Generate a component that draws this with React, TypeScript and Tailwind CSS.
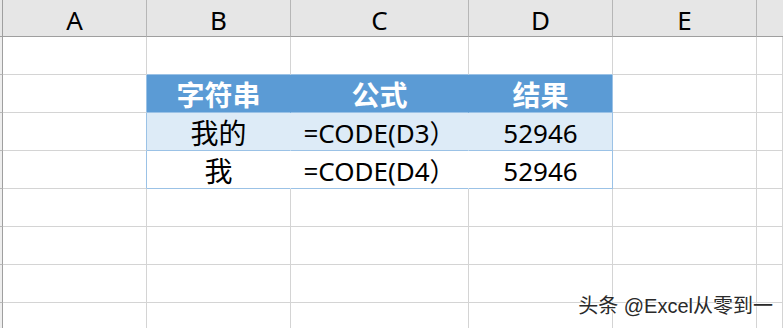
import React from "react";

type Cell = { w: string; cls: string; text?: string; txt?: string };

const FONT = "font-['Noto_Sans','Noto_Sans_CJK_SC',sans-serif]";

const W = {
  rh: "w-[3px]",
  a: "w-[144px]",
  b: "w-[144px]",
  c: "w-[178px]",
  d: "w-[144px]",
  e: "w-[144px]",
};

const grid = "border-r border-b border-r-[#d4d4d4] border-b-[#d4d4d4] bg-white";
const rowHead = "border-r border-b border-r-[#9f9f9f] border-b-[#b8b8b8] bg-[#eeeeee]";

// Han text reads a little larger than the Latin text in these cells
const isHan = (s: string) => /^[\u4e00-\u9fff]+$/.test(s);

function plainRow(
  key: number,
  overrides: Partial<Record<"a" | "b" | "c" | "d" | "e", string>> = {},
  texts: Partial<Record<"b" | "c" | "d", string>> = {},
  txt = "text-black"
) {
  const cells: Cell[] = [
    { w: W.rh, cls: rowHead },
    { w: W.a, cls: overrides.a ?? grid },
    { w: W.b, cls: overrides.b ?? grid, text: texts.b, txt },
    { w: W.c, cls: overrides.c ?? grid, text: texts.c, txt },
    { w: W.d, cls: overrides.d ?? grid, text: texts.d, txt },
    { w: W.e, cls: overrides.e ?? grid },
  ];
  return (
    <div key={key} className="flex h-[38px] shrink-0">
      {cells.map((c, i) => (
        <div
          key={i}
          className={`${c.w} shrink-0 h-full flex items-center justify-center ${c.cls}`}
        >
          {c.text ? (
            <span
              className={`${isHan(c.text) ? "text-[28px] pt-[2px]" : "text-[26px] pt-[3px]"} leading-none ${c.txt}`}
            >
              {c.text}
            </span>
          ) : null}
        </div>
      ))}
      <div className={`flex-1 h-full ${grid}`} />
    </div>
  );
}

const edgeA = "border-r border-b border-r-[#9bc2e6] border-b-[#d4d4d4] bg-white";
const topEdge = "border-r border-b border-r-[#d4d4d4] border-b-[#9bc2e6] bg-white";

const headFill = "border-r border-b border-r-[#5b9bd5] border-b-[#9bc2e6] bg-[#5b9bd5]";
const headFillD = "border-r border-b border-r-[#9bc2e6] border-b-[#9bc2e6] bg-[#5b9bd5]";
const bandFill = "border-r border-b border-r-[#ddebf7] border-b-[#9bc2e6] bg-[#ddebf7]";
const bandFillD = "border-r border-b border-r-[#9bc2e6] border-b-[#9bc2e6] bg-[#ddebf7]";
const whiteFill = "border-r border-b border-r-white border-b-[#9bc2e6] bg-white";
const whiteFillD = "border-r border-b border-r-[#9bc2e6] border-b-[#9bc2e6] bg-white";

export default function App() {
  const letters: [string, string][] = [
    [W.a, "A"],
    [W.b, "B"],
    [W.c, "C"],
    [W.d, "D"],
    [W.e, "E"],
  ];
  return (
    <div className={`relative w-[783px] h-[328px] overflow-hidden bg-white ${FONT}`}>
      {/* column header strip */}
      <div className="flex h-[37px] bg-[#e6e6e6]">
        <div className="w-[3px] shrink-0 h-full border-r border-b border-r-[#9f9f9f] border-b-[#9f9f9f]" />
        {letters.map(([w, l]) => (
          <div
            key={l}
            className={`${w} shrink-0 h-full flex items-center justify-center border-r border-b border-r-[#b6b6b6] border-b-[#9f9f9f] text-[26px] leading-none text-black`}
          >
            <span className="pt-[4px]">{l}</span>
          </div>
        ))}
        <div className="flex-1 h-full border-b border-b-[#9f9f9f]" />
      </div>

      {plainRow(1, { b: topEdge, c: topEdge, d: topEdge })}
      {plainRow(2, { a: edgeA, b: headFill, c: headFill, d: headFillD }, { b: "字符串", c: "公式", d: "结果" }, "text-white font-bold")}
      {plainRow(3, { a: edgeA, b: bandFill, c: bandFill, d: bandFillD }, { b: "我的", c: "=CODE(D3）", d: "52946" })}
      {plainRow(4, { a: edgeA, b: whiteFill, c: whiteFill, d: whiteFillD }, { b: "我", c: "=CODE(D4）", d: "52946" })}
      {plainRow(5)}
      {plainRow(6)}
      {plainRow(7)}
      {plainRow(8)}

      {/* watermark */}
      <div className="absolute right-[10px] top-[296px] text-[20px] leading-none text-[#2a2a2a] [text-shadow:0_0_2px_#ffffff,0_0_2px_#ffffff] font-['Liberation_Sans','Noto_Sans_CJK_SC',sans-serif]">
        头条 @Excel从零到一
      </div>
    </div>
  );
}
